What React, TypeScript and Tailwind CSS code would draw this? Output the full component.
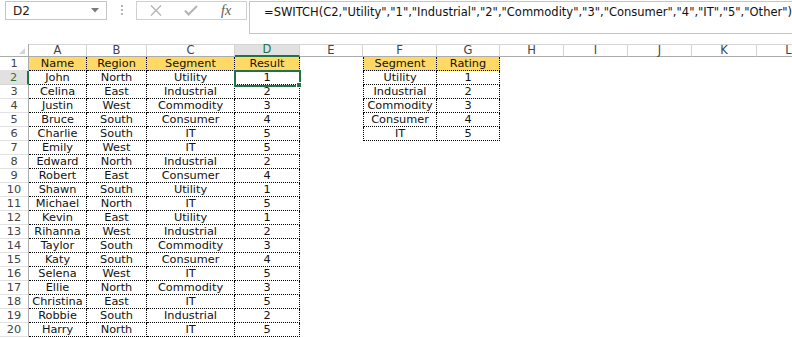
import React from 'react';

type Col = { key: string; w: string };

const cols: Col[] = [
  { key: 'A', w: 'w-[58px]' },
  { key: 'B', w: 'w-[60px]' },
  { key: 'C', w: 'w-[88px]' },
  { key: 'D', w: 'w-[65px]' },
  { key: 'E', w: 'w-[63px]' },
  { key: 'F', w: 'w-[74px]' },
  { key: 'G', w: 'w-[63px]' },
  { key: 'H', w: 'w-[64px]' },
  { key: 'I', w: 'w-[64px]' },
  { key: 'J', w: 'w-[64px]' },
  { key: 'K', w: 'w-[65px]' },
  { key: 'L', w: 'w-[64px]' },
];

const people: string[][] = [
  ['Name', 'Region', 'Segment', 'Result'],
  ['John', 'North', 'Utility', '1'],
  ['Celina', 'East', 'Industrial', '2'],
  ['Justin', 'West', 'Commodity', '3'],
  ['Bruce', 'South', 'Consumer', '4'],
  ['Charlie', 'South', 'IT', '5'],
  ['Emily', 'West', 'IT', '5'],
  ['Edward', 'North', 'Industrial', '2'],
  ['Robert', 'East', 'Consumer', '4'],
  ['Shawn', 'South', 'Utility', '1'],
  ['Michael', 'North', 'IT', '5'],
  ['Kevin', 'East', 'Utility', '1'],
  ['Rihanna', 'West', 'Industrial', '2'],
  ['Taylor', 'South', 'Commodity', '3'],
  ['Katy', 'South', 'Consumer', '4'],
  ['Selena', 'West', 'IT', '5'],
  ['Ellie', 'North', 'Commodity', '3'],
  ['Christina', 'East', 'IT', '5'],
  ['Robbie', 'South', 'Industrial', '2'],
  ['Harry', 'North', 'IT', '5'],
];

const ratings: string[][] = [
  ['Segment', 'Rating'],
  ['Utility', '1'],
  ['Industrial', '2'],
  ['Commodity', '3'],
  ['Consumer', '4'],
  ['IT', '5'],
];

const formula =
  '=SWITCH(C2,"Utility","1","Industrial","2","Commodity","3","Consumer","4","IT","5","Other")';

const font = "font-['DejaVu_Sans',_Verdana,_sans-serif]";

function cellText(row: number, ci: number): string | null {
  if (ci < 4) return people[row - 1][ci];
  if ((ci === 5 || ci === 6) && row <= 6) return ratings[row - 1][ci - 5];
  return null;
}

const Toolbar: React.FC = () => (
  <div className="flex h-[44px] items-start pt-[1px]">
    {/* name box */}
    <div className="ml-[5px] flex h-[19px] w-[102px] shrink-0 items-center justify-between border border-[#c6c6c6] pl-[7px] pr-[7px] text-[12px] text-[#222]">
      <span>D2</span>
      <svg width="8" height="5" viewBox="0 0 8 5">
        <polygon points="0,0 8,0 4,4.5" fill="#7a7a7a" />
      </svg>
    </div>
    <div className="ml-[14px] mt-[4px] flex shrink-0 flex-col gap-[2px]">
      <div className="h-[2px] w-[2px] bg-[#b4b4b4]" />
      <div className="h-[2px] w-[2px] bg-[#b4b4b4]" />
      <div className="h-[2px] w-[2px] bg-[#b4b4b4]" />
    </div>
    {/* cancel / enter / fx */}
    <div className="ml-[13px] flex h-[19px] w-[111px] shrink-0 items-center border border-[#d0d0d0]">
      <svg className="ml-[13px] shrink-0" width="12" height="11" viewBox="0 0 12 11">
        <path d="M1 0.5L11 10.5M11 0.5L1 10.5" stroke="#b4b4b4" strokeWidth="1.3" />
      </svg>
      <svg className="ml-[22px] shrink-0" width="14" height="11" viewBox="0 0 14 11">
        <path d="M1 5.5L4.5 9.5L13 1" stroke="#b4b4b4" strokeWidth="2" fill="none" />
      </svg>
      <span className="ml-[23px] font-['Liberation_Serif',_serif] text-[14px] italic leading-none text-[#595959]">
        fx
      </span>
    </div>
    {/* formula bar */}
    <div className="ml-[2px] flex h-[33px] w-[560px] shrink-0 items-start border border-[#c6c6c6] pl-[14px] pt-[2px] text-[11.5px] whitespace-nowrap text-[#111]">
      {formula}
    </div>
  </div>
);

const HeaderRow: React.FC = () => (
  <div className="flex h-[13px] text-[11.5px] leading-none">
    <div className="flex h-full w-[29px] shrink-0 items-end justify-end border-r border-b border-[#ababab] pr-[3px] pb-[2px]">
      <svg width="6" height="6" viewBox="0 0 6 6">
        <polygon points="6,0 6,6 0,6" fill="#d4d4d4" />
      </svg>
    </div>
    {cols.map((c) =>
      c.key === 'D' ? (
        <div
          key={c.key}
          className={`${c.w} flex h-full shrink-0 items-center justify-center border-t border-r border-t-[#d4d4d4] border-r-[#d4d4d4] border-b-2 border-b-[#217346] bg-[#e1e1e1] text-[#217346]`}
        >
          {c.key}
        </div>
      ) : (
        <div
          key={c.key}
          className={`${c.w} flex h-full shrink-0 items-center justify-center border-t border-r border-b border-t-[#d4d4d4] border-r-[#d4d4d4] border-b-[#ababab] text-[#444]`}
        >
          {c.key}
        </div>
      )
    )}
  </div>
);

const DataRow: React.FC<{ row: number }> = ({ row }) => (
  <div className="flex h-[14px] text-[11.3px] leading-none">
    {row === 2 ? (
      <div className="flex h-full w-[29px] shrink-0 items-center justify-center border-r-2 border-b border-r-[#217346] border-b-[#d4d4d4] bg-[#e1e1e1] text-[#217346]">
        {row}
      </div>
    ) : (
      <div className="flex h-full w-[29px] shrink-0 items-center justify-center border-r border-b border-r-[#ababab] border-b-[#e1e1e1] text-[#444]">
        {row}
      </div>
    )}
    {cols.map((c, ci) => {
      const text = cellText(row, ci);
      if (text === null) {
        return <div key={c.key} className={`${c.w} h-full shrink-0`} />;
      }
      const head = row === 1 ? 'bg-[#ffd966]' : 'bg-white';
      const left = ci === 5 ? 'border-l' : '';
      return (
        <div
          key={c.key}
          className={`${c.w} ${head} ${left} flex h-full shrink-0 items-center justify-center border-r border-b border-dotted border-black text-[#111]`}
        >
          {text}
        </div>
      );
    })}
  </div>
);

export default function App() {
  return (
    <div className={`relative h-[338px] w-[792px] overflow-hidden bg-white ${font}`}>
      <Toolbar />
      <HeaderRow />
      {people.map((_, i) => (
        <DataRow key={i} row={i + 1} />
      ))}
      {/* active cell D2 */}
      <div className="pointer-events-none absolute left-[234px] top-[70px] h-[17px] w-[67px] border-2 border-[#217346]" />
      <div className="pointer-events-none absolute left-[296px] top-[82px] h-[6px] w-[6px] border border-white bg-[#217346]" />
    </div>
  );
}
